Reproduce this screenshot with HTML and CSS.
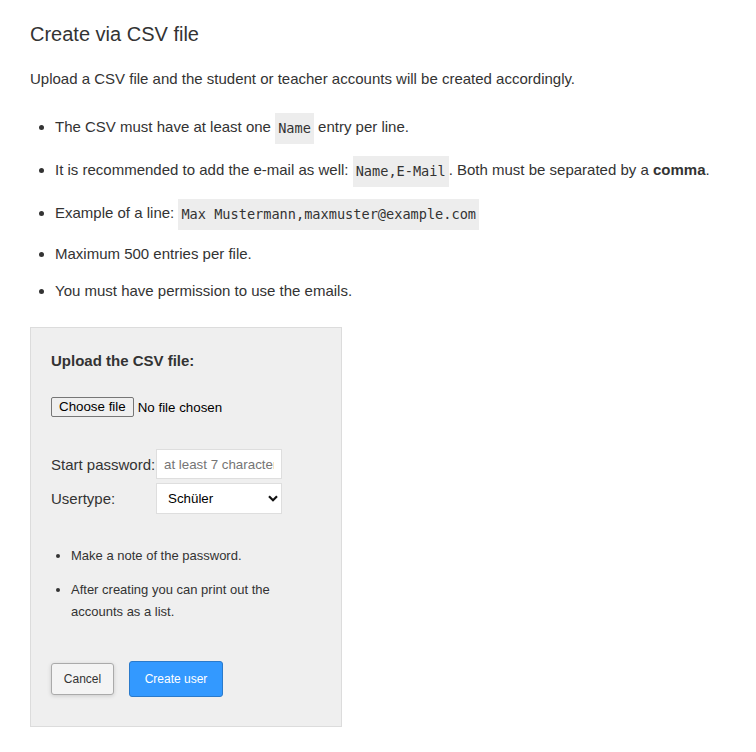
FILE: index.html
```html
<!DOCTYPE html>
<html lang="en">
<head>
  <meta charset="UTF-8">
  <title>Create via CSV file</title>
  <meta name="viewport" content="width=device-width, initial-scale=1">
  <link rel="stylesheet" href="styles.css">
</head>
<body>

<div class="page">
  <h1>Create via CSV file</h1>
  <p class="intro">Upload a CSV file and the student or teacher accounts will be created accordingly.</p>

  <!-- Hinweise -->
  <ul class="rules">
    <li>The CSV must have at least one <code>Name</code> entry per line.</li>
    <li>It is recommended to add the e-mail as well: <code>Name,E-Mail</code>. Both must be separated by a <b>comma</b>.</li>
    <li>Example of a line: <code>Max Mustermann,maxmuster@example.com</code></li>
    <li>Maximum 500 entries per file.</li>
    <li>You must have permission to use the emails.</li>
  </ul>

  <!-- Upload Formular -->
  <form class="upload-box" onsubmit="return false">
    <h2>Upload the CSV file:</h2>

    <div class="file-row">
      <label class="file-btn">Choose file<input type="file" accept=".csv" id="csvFile"></label>
      <span class="file-name" id="fileName">No file chosen</span>
    </div>

    <div class="fields">
      <label for="startPw">Start password:</label>
      <input type="text" id="startPw" placeholder="at least 7 characters">
      <label for="userType">Usertype:</label>
      <span class="select-wrap">
        <select id="userType">
          <option>Schüler</option>
          <option>Lehrer</option>
        </select>
        <svg class="chevron" width="10" height="7" viewBox="0 0 10 7"><path d="M1 1.2 5 5.2 9 1.2" fill="none" stroke="#111" stroke-width="2.2"/></svg>
      </span>
    </div>

    <ul class="notes">
      <li>Make a note of the password.</li>
      <li>After creating you can print out the accounts as a list.</li>
    </ul>

    <div class="actions">
      <button type="button" class="btn-cancel">Cancel</button>
      <button type="submit" class="btn-create">Create user</button>
    </div>
  </form>
</div>

<script>
  document.getElementById('csvFile').addEventListener('change', function() {
    const f = this.files[0];
    document.getElementById('fileName').textContent = f ? f.name : 'No file chosen';
  });
</script>

</body>
</html>
```

FILE: styles.css
```css
* { box-sizing: border-box; margin: 0; padding: 0; }
body {
  font-family: "Liberation Sans", Arial, sans-serif;
  font-size: 15px;
  color: #333;
  background: #fff;
}

.page {
  padding: 22px 30px;
}

h1 {
  font-size: 20px;
  font-weight: normal;
  line-height: 24px;
}

.intro {
  line-height: 20px;
  margin-top: 23px;
}

.rules {
  margin-top: 26px;
  padding-left: 25px;
  line-height: 20px;
}

.rules li + li {
  margin-top: 17px;
}

code {
  display: inline-block;
  font-family: "DejaVu Sans Mono", "Liberation Mono", monospace;
  font-size: 13.6px;
  line-height: 17px;
  padding: 7px 3px;
  margin: -2.5px 0;
  background: #ededed;
  vertical-align: middle;
}

.upload-box {
  width: 312px;
  margin-top: 26px;
  padding: 24px 20px 29px;
  background: #efefef;
  border: 1px solid #dcdcdc;
}

.upload-box h2 {
  font-size: 15px;
  line-height: 18px;
}

.file-row {
  display: flex;
  align-items: center;
  gap: 4px;
  margin-top: 27px;
  font-size: 13.33px;
}

.file-btn {
  position: relative;
  display: inline-block;
  height: 20px;
  line-height: 18px;
  padding: 0 7px;
  background: #efefef;
  border: 1px solid #767676;
  border-radius: 2px;
  color: #000;
  cursor: pointer;
}

.file-btn input {
  display: none;
}

.file-name {
  color: #000;
}

.fields {
  display: grid;
  grid-template-columns: 105px 126px;
  row-gap: 4px;
  align-items: center;
  margin-top: 32px;
}

.fields input,
.fields select {
  width: 126px;
  background: #fff;
  border: 1px solid #dedede;
  font-family: "Liberation Sans", Arial, sans-serif;
  font-size: 13.33px;
  color: #000;
  outline: none;
}

.fields input {
  height: 30px;
  padding: 0 7px;
}

.fields input::placeholder {
  color: #757575;
}

.select-wrap {
  position: relative;
  display: block;
}

.fields select {
  display: block;
  height: 31px;
  padding: 0 11px;
  appearance: none;
  -webkit-appearance: none;
}

.chevron {
  position: absolute;
  right: 4px;
  top: 12px;
  pointer-events: none;
}

.notes {
  margin-top: 31px;
  padding-left: 20px;
  font-size: 13px;
  line-height: 22px;
}

.notes li + li {
  margin-top: 12px;
}

.actions {
  display: flex;
  align-items: center;
  gap: 15px;
  margin-top: 38px;
}

.actions button {
  font-family: "Liberation Sans", Arial, sans-serif;
  font-size: 12px;
  border-radius: 3px;
  cursor: pointer;
}

.btn-cancel {
  width: 63px;
  height: 32px;
  background: #f4f4f4;
  color: #333;
  border: 1px solid #aaa;
  box-shadow: 0 1px 4px rgba(0,0,0,0.15);
}

.btn-create {
  width: 94px;
  height: 36px;
  background: #3399ff;
  color: #fff;
  border: 1px solid #2a7acb;
}
```
